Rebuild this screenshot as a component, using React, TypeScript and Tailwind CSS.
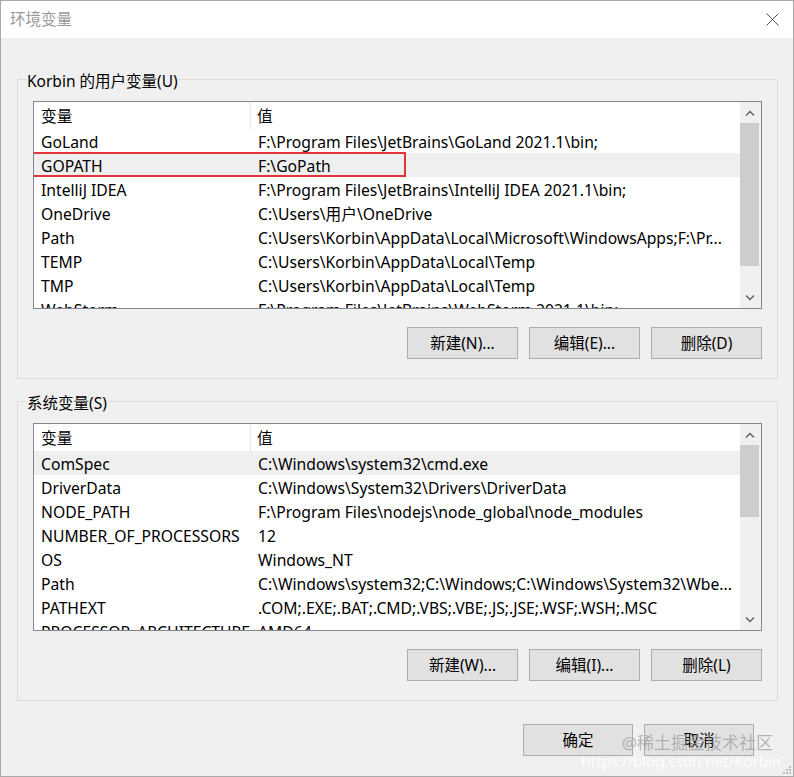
import React from 'react';

type Row = [string, string];

const userVars: Row[] = [
  ['GoLand', 'F:\\Program Files\\JetBrains\\GoLand 2021.1\\bin;'],
  ['GOPATH', 'F:\\GoPath'],
  ['IntelliJ IDEA', 'F:\\Program Files\\JetBrains\\IntelliJ IDEA 2021.1\\bin;'],
  ['OneDrive', 'C:\\Users\\用户\\OneDrive'],
  ['Path', 'C:\\Users\\Korbin\\AppData\\Local\\Microsoft\\WindowsApps;F:\\Pr...'],
  ['TEMP', 'C:\\Users\\Korbin\\AppData\\Local\\Temp'],
  ['TMP', 'C:\\Users\\Korbin\\AppData\\Local\\Temp'],
  ['WebStorm', 'F:\\Program Files\\JetBrains\\WebStorm 2021.1\\bin;'],
];

const systemVars: Row[] = [
  ['ComSpec', 'C:\\Windows\\system32\\cmd.exe'],
  ['DriverData', 'C:\\Windows\\System32\\Drivers\\DriverData'],
  ['NODE_PATH', 'F:\\Program Files\\nodejs\\node_global\\node_modules'],
  ['NUMBER_OF_PROCESSORS', '12'],
  ['OS', 'Windows_NT'],
  ['Path', 'C:\\Windows\\system32;C:\\Windows;C:\\Windows\\System32\\Wbe...'],
  ['PATHEXT', '.COM;.EXE;.BAT;.CMD;.VBS;.VBE;.JS;.JSE;.WSF;.WSH;.MSC'],
  ['PROCESSOR_ARCHITECTURE', 'AMD64'],
];

function Chevron({ up }: { up?: boolean }) {
  return (
    <svg width="10" height="6" viewBox="0 0 10 6" className="block">
      <polyline
        points={up ? '1,5.5 5,1.5 9,5.5' : '1,0.5 5,4.5 9,0.5'}
        fill="none"
        stroke="#606060"
        strokeWidth="1.4"
      />
    </svg>
  );
}

function Scrollbar({ thumbHeight }: { thumbHeight: number }) {
  return (
    <div className="w-[21px] shrink-0 bg-[#f0f0f0] flex flex-col">
      <div className="h-[21px] flex items-center justify-center pr-[2px]">
        <Chevron up />
      </div>
      <div className="flex-1 flex flex-col pr-[2px]">
        <div className="bg-[#cdcdcd]" style={{ height: thumbHeight }} />
      </div>
      <div className="h-[21px] flex items-center justify-center pr-[2px]">
        <Chevron />
      </div>
    </div>
  );
}

function VarList({
  rows,
  highlight,
  marked,
  thumbHeight,
}: {
  rows: Row[];
  highlight: number;
  marked?: number;
  thumbHeight: number;
}) {
  return (
    <div className="h-[208px] border border-[#828790] bg-white flex text-[15.7px]">
      <div className="flex-1 min-w-0 overflow-hidden">
        <div className="h-[27px] flex items-center">
          <div className="w-[217px] shrink-0 h-full pl-[7px] pt-[3px] flex items-center border-r border-[#e5e5e5]">
            变量
          </div>
          <div className="pl-[6px] pt-[3px]">值</div>
        </div>
        {rows.map(([name, value], i) => (
          <div
            key={name + i}
            className={
              'relative h-[24px] pt-[3px] flex items-center whitespace-nowrap ' +
              (i === highlight ? 'bg-[#efefef]' : '')
            }
          >
            <div className="w-[217px] shrink-0 pl-[7px] overflow-hidden">{name}</div>
            <div className="pl-[7px]">{value}</div>
            {i === marked && (
              <div className="absolute left-[-3px] top-[-1px] w-[375px] h-[25px] border-[2.5px] border-[#e3343a]" />
            )}
          </div>
        ))}
      </div>
      <Scrollbar thumbHeight={thumbHeight} />
    </div>
  );
}

function Btn({ children, w = 'w-[111px]' }: { children: React.ReactNode; w?: string }) {
  return (
    <button
      className={
        w +
        ' h-[32px] pt-[1px] bg-[#e1e1e1] border border-[#adadad] text-[15.5px] text-black flex items-center justify-center'
      }
    >
      {children}
    </button>
  );
}

function Group({
  title,
  children,
  className = '',
}: {
  title: string;
  children: React.ReactNode;
  className?: string;
}) {
  return (
    <fieldset className={'border border-[#dcdcdc] ' + className}>
      <legend className="ml-[8px] px-[1px] pt-[3px] leading-[20px] text-[15.5px]">{title}</legend>
      <div className="px-[15px] pt-[10px] pb-[19px]">{children}</div>
    </fieldset>
  );
}

export default function App() {
  return (
    <div
      className="relative w-[794px] h-[777px] border border-[#a9a9a9] bg-[#f0f0f0] flex flex-col text-[15px] text-black"
      style={{ fontFamily: '"Noto Sans", "Noto Sans CJK SC", sans-serif' }}
    >
      {/* title bar */}
      <div className="h-[37px] bg-white flex items-center justify-between pl-[9px] pr-[14px]">
        <span className="text-[#9a9a9a] text-[15.5px]">环境变量</span>
        <svg width="13" height="13" viewBox="0 0 13 13">
          <path d="M0.5 0.5 L12.5 12.5 M12.5 0.5 L0.5 12.5" stroke="#555" strokeWidth="1" />
        </svg>
      </div>

      <div className="pl-[16px] pr-[15px] pt-[30px] flex flex-col">
        <Group title="Korbin 的用户变量(U)">
          <VarList rows={userVars} highlight={1} marked={1} thumbHeight={143} />
          <div className="flex justify-end gap-[11px] mt-[18px]">
            <Btn>新建(N)...</Btn>
            <Btn>编辑(E)...</Btn>
            <Btn>删除(D)</Btn>
          </div>
        </Group>

        <Group title="系统变量(S)" className="mt-[11px]">
          <VarList rows={systemVars} highlight={0} thumbHeight={72} />
          <div className="flex justify-end gap-[11px] mt-[18px]">
            <Btn>新建(W)...</Btn>
            <Btn>编辑(I)...</Btn>
            <Btn>删除(L)</Btn>
          </div>
        </Group>

        <div className="flex justify-end gap-[11px] mt-[23px] pr-[24px]">
          <Btn w="w-[110px]">确定</Btn>
          <Btn w="w-[110px]">取消</Btn>
        </div>
      </div>

      {/* watermark */}
      <div className="absolute right-[20px] bottom-[21px] text-[17px] text-[#9a9a9a]/70 pointer-events-none">
        @稀土掘金技术社区
      </div>
      <div className="absolute right-[12px] bottom-[4px] text-[15px] text-white/80 pointer-events-none">
        https://blog.csdn.net/Korbin
      </div>
      {/* resize grip */}
      <svg className="absolute right-[1px] bottom-[1px]" width="10" height="10" viewBox="0 0 10 10">
        <rect x="7" y="1" width="2" height="2" fill="#bdbdbd" />
        <rect x="4" y="4" width="2" height="2" fill="#bdbdbd" />
        <rect x="7" y="4" width="2" height="2" fill="#bdbdbd" />
        <rect x="1" y="7" width="2" height="2" fill="#bdbdbd" />
        <rect x="4" y="7" width="2" height="2" fill="#bdbdbd" />
        <rect x="7" y="7" width="2" height="2" fill="#bdbdbd" />
      </svg>
    </div>
  );
}
